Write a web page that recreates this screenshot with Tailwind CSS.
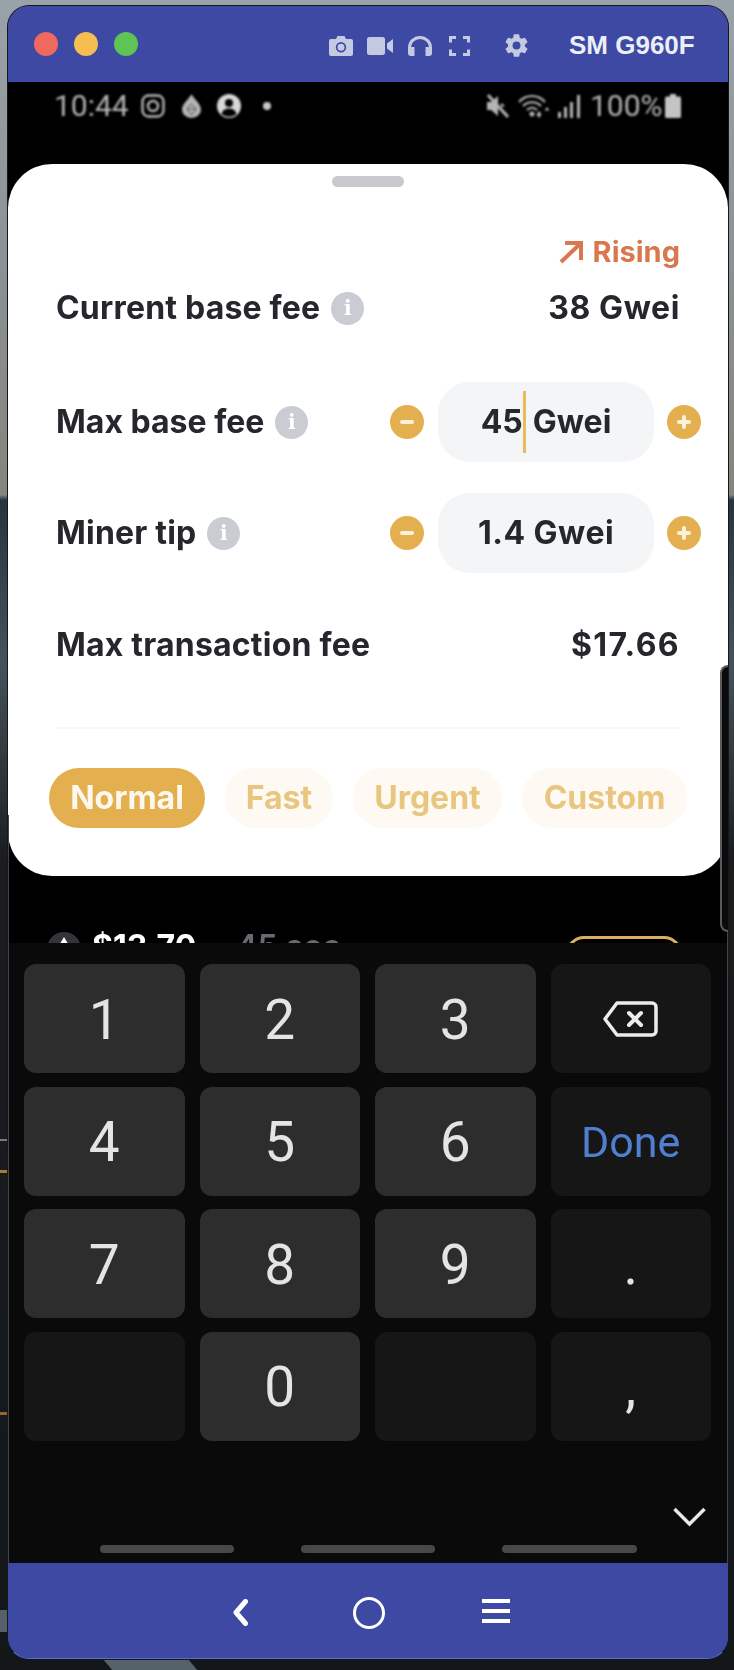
<!DOCTYPE html>
<html>
<head>
<meta charset="utf-8">
<script src="https://cdn.jsdelivr.net/npm/@tailwindcss/browser@4"></script>
</head>
<body class="bg-[#0d1114]">
<div class="relative w-[734px] h-[1670px] overflow-hidden pt-[5px] pl-[7px] bg-[linear-gradient(180deg,#9aa2a9_0px,#8b8f90_300px,#85857c_495px,#27343e_500px,#46525a_660px,#2a2f33_800px,#1a1c1e_860px,#14171a_1670px)]">
  <!-- wallpaper streaks -->
  <span class="absolute left-0 top-[1170px] w-[8px] h-[3px] bg-[#a87a34]"></span>
  <span class="absolute left-0 top-[1139px] w-[8px] h-[2px] bg-[#77797b]"></span>
  <span class="absolute left-0 top-[1412px] w-[8px] h-[3px] bg-[#8a6a30]"></span>
  <span class="absolute left-0 top-[1610px] w-[8px] h-[22px] bg-[#56626a]"></span>
  <span class="absolute left-[108px] top-[1660px] w-[85px] h-[10px] bg-[#56626a] skew-x-[40deg]"></span>

  <div class="relative w-[722px] h-[1654px] flex flex-col rounded-[22px] overflow-hidden border border-[#15171f] border-b-[#5d6ec4] bg-[#3e49a4]">
    <!-- title bar -->
    <header class="h-[76px] shrink-0 flex items-start pt-[26px] pl-[26px] bg-[#3e49a4] relative">
      <div class="flex gap-[16px]">
        <span class="w-[24px] h-[24px] rounded-full bg-[#f0695e]"></span>
        <span class="w-[24px] h-[24px] rounded-full bg-[#f6bd50]"></span>
        <span class="w-[24px] h-[24px] rounded-full bg-[#5dc455]"></span>
      </div>
      <div class="ml-[191px] flex items-center text-[#c5cae3]">
        <svg class="w-[24px] h-[20px]" viewBox="0 0 24 20"><path fill="currentColor" fill-rule="evenodd" d="M2 3h5l1.500-3h7L17 3h5a2 2 0 0 1 2 2v13a2 2 0 0 1-2 2H2a2 2 0 0 1-2-2V5a2 2 0 0 1 2-2zm10 3a5.200 5.200 0 1 0 0 10.400A5.200 5.200 0 0 0 12 6zm0 1.700a3.500 3.500 0 1 1 0 7 3.500 3.500 0 0 1 0-7z"/></svg>
        <svg class="ml-[14px] w-[26px] h-[18px]" viewBox="0 0 26 18"><path fill="currentColor" d="M2.500 0h13A2.500 2.500 0 0 1 18 2.500v13a2.500 2.500 0 0 1-2.500 2.500h-13A2.500 2.500 0 0 1 0 15.500v-13A2.500 2.500 0 0 1 2.500 0zM20 6.500 26 2v14l-6-4.500z"/></svg>
        <svg class="ml-[15px] w-[24px] h-[20px]" viewBox="0 0 24 20"><path fill="none" stroke="currentColor" stroke-width="3" d="M1.500 18v-6.500a10.500 10 0 0 1 21 0V18"/><path fill="currentColor" d="M0 11h6.500v9H3a3 3 0 0 1-3-3zM24 11h-6.500v9H21a3 3 0 0 0 3-3z"/></svg>
        <svg class="ml-[17px] w-[21px] h-[20px]" viewBox="0 0 21 20"><path fill="none" stroke="currentColor" stroke-width="3" d="M1.500 6.500v-5h5.500M14 1.500h5.500v5M19.500 13.500v5H14M7 18.500H1.500v-5"/></svg>
        <svg class="ml-[33px] w-[27px] h-[27px]" viewBox="0 0 24 24"><path fill="currentColor" d="M19.430 12.980c.04-.32.07-.64.07-.98s-.03-.66-.07-.98l2.110-1.650a.5.500 0 0 0 .12-.64l-2-3.460a.5.500 0 0 0-.61-.22l-2.490 1a7.300 7.300 0 0 0-1.690-.98l-.38-2.650A.49.490 0 0 0 14 2h-4a.49.490 0 0 0-.49.420l-.38 2.650c-.61.250-1.170.590-1.690.980l-2.490-1a.5.500 0 0 0-.61.220l-2 3.460a.49.490 0 0 0 .12.640l2.110 1.650c-.04.320-.07.650-.07.980s.03.660.07.980l-2.110 1.650a.5.500 0 0 0-.12.640l2 3.460c.12.220.39.300.61.220l2.490-1c.52.400 1.080.730 1.690.980l.38 2.650c.03.240.240.420.49.420h4c.25 0 .46-.18.49-.42l.38-2.650c.61-.25 1.170-.59 1.690-.98l2.490 1c.23.090.490 0 .61-.22l2-3.460a.5.500 0 0 0-.12-.64zM12 15.500a3.500 3.500 0 1 1 0-7 3.500 3.500 0 0 1 0 7z"/></svg>
      </div>
      <span class="ml-[39px] mt-[1px] text-[26px] leading-[24px] font-bold text-[#eceef8] whitespace-nowrap font-['Liberation_Sans',sans-serif]">SM G960F</span>
    </header>

    <!-- phone screen -->
    <main class="flex-1 relative bg-black overflow-hidden flex flex-col">
      <!-- status bar -->
      <div class="h-[82px] shrink-0 flex items-start pt-[12px] pl-[46px] text-[#b4b4b4] blur-[1px] font-['Roboto',sans-serif]">
        <span class="text-[30px] leading-[24px] w-[87px]">10:44</span>
        <svg class="w-[24px] h-[24px]" viewBox="0 0 24 24"><rect x="1.500" y="1.500" width="21" height="21" rx="6" fill="none" stroke="currentColor" stroke-width="2.400"/><circle cx="12" cy="12" r="5" fill="none" stroke="currentColor" stroke-width="2.400"/></svg>
        <svg class="ml-[17px] w-[19px] h-[24px]" viewBox="0 0 19 24"><path fill="currentColor" d="M9.500 0C12 5 19 10 19 15.500a9.500 8.500 0 0 1-19 0C0 10 7 5 9.500 0z"/><path fill="none" stroke="#000" stroke-width="1" opacity=".5" d="M5 15l4.500-5 4.500 5-4.500 6zM5 15h9"/></svg>
        <svg class="ml-[16px] w-[24px] h-[24px]" viewBox="0 0 24 24"><circle cx="12" cy="12" r="12" fill="#d8d8d8"/><circle cx="12" cy="9" r="4" fill="#000"/><path fill="#000" d="M4.500 20c1-4 4-5.500 7.500-5.500s6.500 1.500 7.500 5.500a12 12 0 0 1-15 0z"/></svg>
        <span class="ml-[22px] mt-[8px] w-[8px] h-[8px] rounded-full bg-[#c8c8c8]"></span>
        <svg class="ml-[215px] w-[23px] h-[24px]" viewBox="0 0 23 24"><path fill="currentColor" d="M1 8h4l7-6v20l-7-6H1z"/><path fill="currentColor" d="M15 9c2 1 3 2 4 3l-4 1z"/><path stroke="currentColor" stroke-width="3" d="M2 1l20 22"/></svg>
        <svg class="ml-[9px] w-[32px] h-[24px]" viewBox="0 0 32 24"><path fill="none" stroke="currentColor" stroke-width="2.200" d="M1 8C8 0 20 0 27 8M5 12c5-5 13-5 18 0M9 16c3-3 7-3 10 0"/><circle cx="14" cy="20" r="2.500" fill="currentColor"/><path fill="currentColor" d="M21 17l2.500 3.500h-5zM21 24l2.500-3.500h-5zM29 13l2.500 3.500h-5z"/></svg>
        <svg class="ml-[8px] w-[22px] h-[23px] mt-[1px]" viewBox="0 0 22 23"><path fill="currentColor" d="M0 17h3v6H0zM6 12h3v11H6zM12 7h3v16h-3zM19 0h3v23h-3z"/></svg>
        <span class="ml-[10px] w-[75px] text-[30px] leading-[24px]">100%</span>
        <svg class="w-[16px] h-[24px]" viewBox="0 0 16 24"><path fill="#c4c4c4" d="M5 0h6v2.500h3.500A1.500 1.500 0 0 1 16 4v18.500a1.500 1.500 0 0 1-1.500 1.500h-13A1.500 1.500 0 0 1 0 22.500V4a1.500 1.500 0 0 1 1.500-1.500H5z"/></svg>
      </div>

      <!-- sheet -->
      <section class="h-[712px] shrink-0 bg-white rounded-[44px] blur-[0.6px] text-[#25272d] font-['Inter',sans-serif] font-bold relative">
        <div class="w-[72px] h-[11px] rounded-full bg-[#c8c8cf] mx-auto mt-[12px] mb-[53px]"></div>
        <div class="flex justify-end items-center pr-[48px] h-[24px] text-[#d9784e] text-[29px] gap-[9px]">
          <svg class="w-[25px] h-[24px]" viewBox="0 0 25 24"><path fill="none" stroke="currentColor" stroke-width="4" d="M2 22 22 3M6 3h16v17"/></svg>
          <span class="leading-[24px]">Rising</span>
        </div>
        <div class="mt-[24px] h-[40px] flex items-center pl-[48px] pr-[48px] text-[32px] tracking-[0.2px]">
          <span>Current base fee</span>
          <span class="ml-[11px] w-[33px] h-[33px] rounded-full bg-[#c9ccd3] flex items-center justify-center text-white text-[20px] font-['DejaVu_Serif',serif]">i</span>
          <span class="ml-auto tracking-[0.6px]">38 Gwei</span>
        </div>
        <div class="mt-[54px] h-[80px] flex items-center pl-[48px] text-[32px]">
          <span>Max base fee</span>
          <span class="ml-[11px] w-[33px] h-[33px] rounded-full bg-[#c9ccd3] flex items-center justify-center text-white text-[20px] font-['DejaVu_Serif',serif]">i</span>
          <span class="ml-auto w-[34px] h-[34px] rounded-full bg-[#e4b04f] flex items-center justify-center"><span class="w-[14px] h-[4px] bg-[#fbf0da] rounded-full"></span></span>
          <div class="ml-[14px] w-[216px] h-[80px] rounded-[32px] bg-[#f4f5f7] flex items-center justify-center">
            <span>45</span><span class="w-[3px] h-[62px] bg-[#e8bc5c]"></span><span class="ml-[7px]">Gwei</span>
          </div>
          <span class="ml-[13px] mr-[27px] w-[34px] h-[34px] rounded-full bg-[#e4b04f] relative"><span class="absolute left-[10px] top-[15px] w-[14px] h-[4px] bg-[#fbf0da] rounded-full"></span><span class="absolute left-[15px] top-[10px] w-[4px] h-[14px] bg-[#fbf0da] rounded-full"></span></span>
        </div>
        <div class="mt-[31px] h-[80px] flex items-center pl-[48px] text-[32px] tracking-[0.2px]">
          <span>Miner tip</span>
          <span class="ml-[11px] w-[33px] h-[33px] rounded-full bg-[#c9ccd3] flex items-center justify-center text-white text-[20px] font-['DejaVu_Serif',serif]">i</span>
          <span class="ml-auto w-[34px] h-[34px] rounded-full bg-[#e4b04f] flex items-center justify-center"><span class="w-[14px] h-[4px] bg-[#fbf0da] rounded-full"></span></span>
          <div class="ml-[14px] w-[216px] h-[80px] rounded-[32px] bg-[#f4f5f7] flex items-center justify-center tracking-[0.5px]">1.4 Gwei</div>
          <span class="ml-[13px] mr-[27px] w-[34px] h-[34px] rounded-full bg-[#e4b04f] relative"><span class="absolute left-[10px] top-[15px] w-[14px] h-[4px] bg-[#fbf0da] rounded-full"></span><span class="absolute left-[15px] top-[10px] w-[4px] h-[14px] bg-[#fbf0da] rounded-full"></span></span>
        </div>
        <div class="mt-[52px] h-[40px] flex items-center justify-between px-[48px] text-[32px] tracking-[0.2px]">
          <span>Max transaction fee</span>
          <span class="tracking-[1.4px]">$17.66</span>
        </div>
        <div class="mt-[62px] mx-[47px] h-[2px] bg-[#f6f6f6]"></div>
        <div class="mt-[39px] ml-[41px] flex gap-[20px] text-[32px] text-[#e8c67f]">
          <span class="w-[156px] h-[60px] rounded-full bg-[#e4b04f] text-[#fdf8ee] flex items-center justify-center">Normal</span>
          <span class="w-[108px] h-[60px] rounded-full bg-[#fefaf3] flex items-center justify-center">Fast</span>
          <span class="w-[149px] h-[60px] rounded-full bg-[#fefaf3] flex items-center justify-center">Urgent</span>
          <span class="w-[165px] h-[60px] rounded-full bg-[#fefaf3] flex items-center justify-center">Custom</span>
        </div>
      </section>

      <!-- content peeking out between the sheet and the keyboard -->
      <div class="h-[67px] shrink-0 relative overflow-hidden pl-[39px] pt-[54px] flex items-start blur-[0.6px] font-['Inter',sans-serif] font-bold">
        <span class="mt-[2px] w-[34px] h-[34px] rounded-full bg-[#33353b] flex justify-center pt-[5px]"><span class="w-0 h-0 border-x-[6px] border-x-transparent border-b-[10px] border-b-white"></span></span>
        <span class="ml-[11px] text-white text-[32px] leading-[34px]">$13.70</span>
        <span class="ml-[40px] text-[#686a72] text-[32px] leading-[34px] font-semibold">45 sec</span>
        <span class="absolute left-[558px] top-[60px] w-[116px] h-[60px] rounded-[18px] border-[3px] border-[#d9ae5c]"></span>
      </div>

      <!-- keyboard -->
      <div class="flex-1 bg-[#0a0a0a] relative pt-[21px] pl-[16px] blur-[0.5px] font-['Roboto',sans-serif] font-normal text-[55px] text-[#e4e4e4]">
        <div class="grid grid-cols-[160.500px_160.500px_160.500px_160.500px] auto-rows-[109px] gap-x-[15px] gap-y-[13.500px] [&>div]:pt-[3px]">
          <div class="rounded-[12px] bg-[#2d2d2d] flex items-center justify-center">1</div>
          <div class="rounded-[12px] bg-[#2d2d2d] flex items-center justify-center">2</div>
          <div class="rounded-[12px] bg-[#2d2d2d] flex items-center justify-center">3</div>
          <div class="rounded-[12px] bg-[#161616] flex items-center justify-center">
            <svg class="w-[55px] h-[36px] -mt-[2px]" viewBox="0 0 55 36"><path fill="none" stroke="#ececec" stroke-width="3.500" stroke-linejoin="round" d="M14 2h35a4 4 0 0 1 4 4v24a4 4 0 0 1-4 4H14L2 18z"/><path stroke="#ececec" stroke-width="4" stroke-linecap="round" d="M26 12l12 12M38 12 26 24"/></svg>
          </div>
          <div class="rounded-[12px] bg-[#2d2d2d] flex items-center justify-center">4</div>
          <div class="rounded-[12px] bg-[#2d2d2d] flex items-center justify-center">5</div>
          <div class="rounded-[12px] bg-[#2d2d2d] flex items-center justify-center">6</div>
          <div class="rounded-[12px] bg-[#161616] flex items-center justify-center text-[43px] text-[#4f7fd0]">Done</div>
          <div class="rounded-[12px] bg-[#2d2d2d] flex items-center justify-center">7</div>
          <div class="rounded-[12px] bg-[#2d2d2d] flex items-center justify-center">8</div>
          <div class="rounded-[12px] bg-[#2d2d2d] flex items-center justify-center">9</div>
          <div class="rounded-[12px] bg-[#161616] flex items-center justify-center">.</div>
          <div class="rounded-[12px] bg-[#161616]"></div>
          <div class="rounded-[12px] bg-[#2d2d2d] flex items-center justify-center">0</div>
          <div class="rounded-[12px] bg-[#161616]"></div>
          <div class="rounded-[12px] bg-[#161616] flex items-center justify-center">,</div>
        </div>
        <svg class="absolute left-[665px] top-[564px] w-[33px] h-[20px]" viewBox="0 0 33 20"><path fill="none" stroke="#e8e8e8" stroke-width="3.500" d="M1.500 2 16.500 17 31.500 2"/></svg>
        <div class="absolute left-[92px] top-[602px] flex gap-[67px]">
          <span class="w-[134px] h-[8px] rounded-full bg-[#484848]"></span>
          <span class="w-[134px] h-[8px] rounded-full bg-[#484848]"></span>
          <span class="w-[135px] h-[8px] rounded-full bg-[#484848]"></span>
        </div>
      </div>

      <!-- edge panel handle -->
      <div class="absolute left-[712px] top-[583px] w-[10px] h-[267px] rounded-l-[8px] bg-[#0b0b0b] border-l-2 border-y-2 border-[#5a5a5a]"></div>
      <!-- frame highlights -->
      <span class="absolute left-0 top-[733px] bottom-0 w-[1px] bg-[#444]"></span>
      <span class="absolute right-0 top-[850px] bottom-0 w-[1px] bg-[#444]"></span>
    </main>

    <!-- nav bar -->
    <footer class="h-[95px] shrink-0 bg-[#3e49a4] relative flex items-start pt-[36px] pl-[225px]">
      <svg class="w-[15px] h-[27px]" viewBox="0 0 15 27"><path fill="none" stroke="#fff" stroke-width="5" stroke-linecap="round" stroke-linejoin="round" d="M12.500 2.500 3 13.500 12.500 24.500"/></svg>
      <svg class="ml-[105px] w-[32px] h-[32px] -mt-[2px]" viewBox="0 0 32 32"><circle cx="16" cy="16" r="14.500" fill="none" stroke="#fff" stroke-width="3"/></svg>
      <div class="ml-[97px] w-[28px] flex flex-col gap-[6px]">
        <span class="h-[4px] bg-white"></span>
        <span class="h-[4px] bg-white"></span>
        <span class="h-[4px] bg-white"></span>
      </div>
    </footer>
  </div>
</div>
</body>
</html>
